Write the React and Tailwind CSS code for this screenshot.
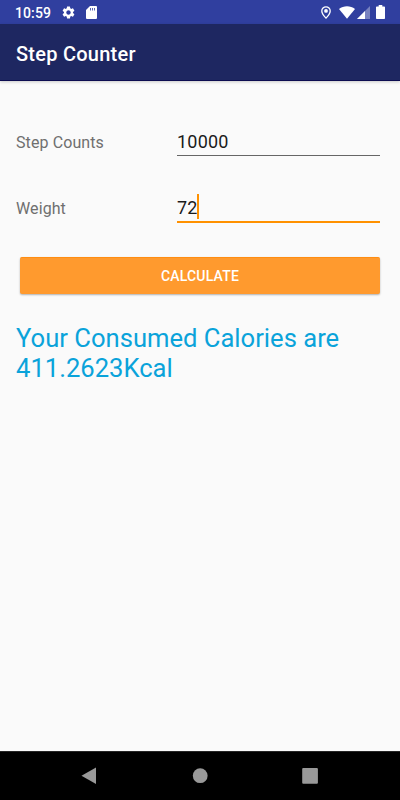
import { MdSettings } from 'react-icons/md';

const StatusBar = () => (
    <div className="h-6 bg-[#303f9f] text-white flex items-center pl-[15px] pr-[15px]">
        <span className="text-[14px] leading-6 font-medium w-[46px] pt-[2px] tracking-[0.1px]">10:59</span>
        <MdSettings className="w-[15px] h-[15px]" />
        <svg className="w-[11px] h-[13px] ml-[10px]" viewBox="0 0 11 13" fill="currentColor">
            <path fillRule="evenodd" d="M4 0h6a1 1 0 0 1 1 1v11a1 1 0 0 1-1 1H1a1 1 0 0 1-1-1V4zM4 2v2.500h.8V2zM6 2v2.500h.8V2zM8 2v2.500h.8V2z" />
        </svg>
        <svg className="w-[10px] h-[13px] ml-auto" viewBox="0 0 10 13" fill="none" stroke="currentColor">
            <path strokeWidth="1.3" d="M5 .8C2.600.8.8 2.600.8 4.900.8 7.700 5 12.100 5 12.100S9.200 7.700 9.200 4.900C9.200 2.600 7.400.8 5 .8z" />
            <circle cx="5" cy="4.900" r="1.900" fill="currentColor" stroke="none" />
        </svg>
        <svg className="w-4 h-[13px] ml-2" viewBox="0 0 16 13" fill="currentColor">
            <path d="M0 2.900C4.500-.6 11.500-.6 16 2.900L8 12.700z" />
        </svg>
        <svg className="w-[13px] h-[13px] ml-[2px]" viewBox="0 0 13 13" fill="currentColor">
            <path d="M0 13L13 0v13z" opacity=".35" />
            <path d="M0 13L8 5v8z" />
        </svg>
        <svg className="w-[9px] h-[14px] ml-[6px]" viewBox="0 0 9 14" fill="currentColor">
            <path d="M2.700 0h3.600v1.500H8.200a.8.8 0 0 1 .8.8v10.900a.8.8 0 0 1-.8.8H.8a.8.8 0 0 1-.8-.8V2.300a.8.8 0 0 1 .8-.8h1.900z" />
        </svg>
    </div>
);

const Field = ({ label, value, focused }) => (
    <div className="flex h-[46px] items-start">
        <span className="w-[161px] pt-[9px] text-[16px] leading-[23px] tracking-[0.1px] text-[#6f6f6f]">{label}</span>
        <div className={`w-[203px] flex items-start ${focused ? 'h-[35px] border-b-2 border-[#ff9100]' : 'h-[34px] border-b border-[#666666]'}`}>
            <span className="pt-[8px] text-[18px] leading-[24px] tracking-[0.2px] text-[#1b1b1b]">{value}</span>
            {focused && <span className="w-[2px] h-[25px] mt-[6px] -ml-px bg-[#ff9100]" />}
        </div>
    </div>
);

const NavBar = () => (
    <div className="h-[49px] bg-black border-t border-[#262626] text-[#999999]">
        <svg className="w-full h-12" viewBox="0 0 400 48" fill="currentColor">
            <path d="M81.500 23.700L96 15.500v16.400z" />
            <circle cx="200.200" cy="23.700" r="7.400" />
            <rect x="302.200" y="15.900" width="15.700" height="15.900" rx="1" />
        </svg>
    </div>
);

const App = () => (
    <div className="h-screen w-full flex flex-col bg-[#fafafa] font-['Roboto',sans-serif]">
        <StatusBar />
        <header className="h-[57px] bg-[#1e2761] border-b border-[#0c0c50] shadow-[0_1px_3px_rgba(0,0,0,0.2)] flex items-center px-4">
            <h1 className="text-[20px] font-medium tracking-[0.25px] text-white pt-[4px]">Step Counter</h1>
        </header>
        <main className="flex-1 px-4 pt-[41px]">
            <Field label="Step Counts" value="10000" />
            <div className="h-5" />
            <Field label="Weight" value="72" focused />
            <button className="block ml-1 mt-[23px] w-[360px] h-[37px] rounded-[2px] bg-[#ff9a2e] border-t border-[#ff8d12] text-white text-[14px] font-medium tracking-[0.2px] shadow-[0_1px_2px_rgba(0,0,0,0.3)]">
                CALCULATE
            </button>
            <p className="mt-[29px] text-[25.6px] leading-[30px] text-[#0aa3da]">
                Your Consumed Calories are 411.2623Kcal
            </p>
        </main>
        <NavBar />
    </div>
);

export default App;
